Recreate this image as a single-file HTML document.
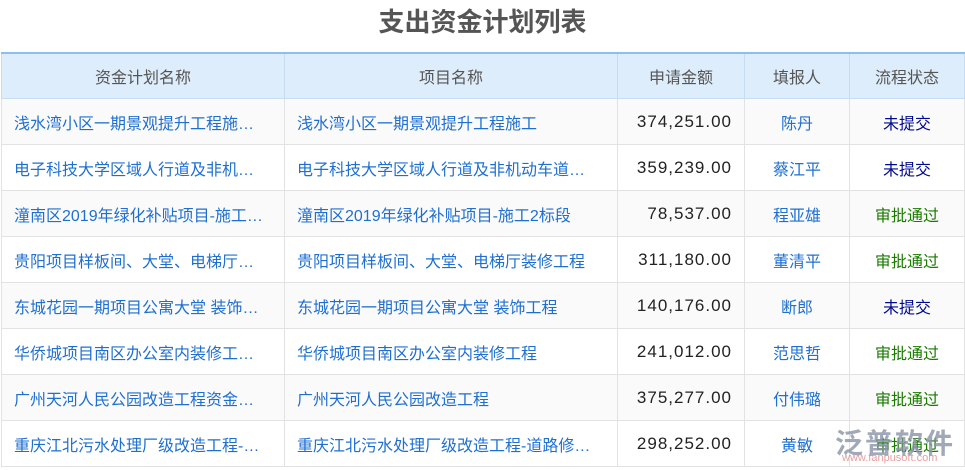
<!DOCTYPE html>
<html><head><meta charset="utf-8"><style>
body{margin:0;background:#fff;width:965px;height:470px;overflow:hidden;font-family:"Liberation Sans","Noto Sans CJK SC",sans-serif;}
h1{margin:0;position:absolute;top:4px;left:0;width:965px;text-align:center;font-size:26px;font-weight:bold;color:#555;line-height:36px;}
table{position:absolute;top:52px;left:1px;border-collapse:collapse;table-layout:fixed;width:963px;font-size:16px;}
th{background:#deedfb;color:#555;font-weight:normal;height:44px;padding:0;border:1px solid #c5dcf2;border-top:2px solid #8cbfef;}
td{height:45px;padding:0 12px;border:1px solid #e2e2e2;color:#1f6fd1;white-space:nowrap;overflow:hidden;}
tr:nth-child(even) td{background:#fafafa;}
td.n{text-align:right;color:#222;font-size:17px;letter-spacing:1px;}
td.c{text-align:center;padding:0;}
.u{color:#000a8f}.g{color:#1a7a00}
.wm{position:absolute;left:835px;top:422px;font-size:28px;color:#8a94a8;opacity:.8;font-weight:bold;letter-spacing:2px}
.wm2{position:absolute;left:842px;top:452px;font-size:11px;color:#d88;opacity:.8}
</style></head><body>
<h1>支出资金计划列表</h1>
<table>
<colgroup><col style="width:283px"><col style="width:333px"><col style="width:127px"><col style="width:105px"><col style="width:115px"></colgroup>
<tr><th>资金计划名称</th><th>项目名称</th><th>申请金额</th><th>填报人</th><th>流程状态</th></tr>
<tr><td>浅水湾小区一期景观提升工程施…</td><td>浅水湾小区一期景观提升工程施工</td><td class="n">374,251.00</td><td class="c">陈丹</td><td class="c u">未提交</td></tr>
<tr><td>电子科技大学区域人行道及非机…</td><td>电子科技大学区域人行道及非机动车道…</td><td class="n">359,239.00</td><td class="c">蔡江平</td><td class="c u">未提交</td></tr>
<tr><td>潼南区2019年绿化补贴项目-施工…</td><td>潼南区2019年绿化补贴项目-施工2标段</td><td class="n">78,537.00</td><td class="c">程亚雄</td><td class="c g">审批通过</td></tr>
<tr><td>贵阳项目样板间、大堂、电梯厅…</td><td>贵阳项目样板间、大堂、电梯厅装修工程</td><td class="n">311,180.00</td><td class="c">董清平</td><td class="c g">审批通过</td></tr>
<tr><td>东城花园一期项目公寓大堂 装饰…</td><td>东城花园一期项目公寓大堂 装饰工程</td><td class="n">140,176.00</td><td class="c">断郎</td><td class="c u">未提交</td></tr>
<tr><td>华侨城项目南区办公室内装修工…</td><td>华侨城项目南区办公室内装修工程</td><td class="n">241,012.00</td><td class="c">范思哲</td><td class="c g">审批通过</td></tr>
<tr><td>广州天河人民公园改造工程资金…</td><td>广州天河人民公园改造工程</td><td class="n">375,277.00</td><td class="c">付伟璐</td><td class="c g">审批通过</td></tr>
<tr><td>重庆江北污水处理厂级改造工程-…</td><td>重庆江北污水处理厂级改造工程-道路修…</td><td class="n">298,252.00</td><td class="c">黄敏</td><td class="c g">审批通过</td></tr>
</table>
<div class="wm">泛普软件</div>
<div class="wm2">www.fanpusoft.com</div>
</body></html>
